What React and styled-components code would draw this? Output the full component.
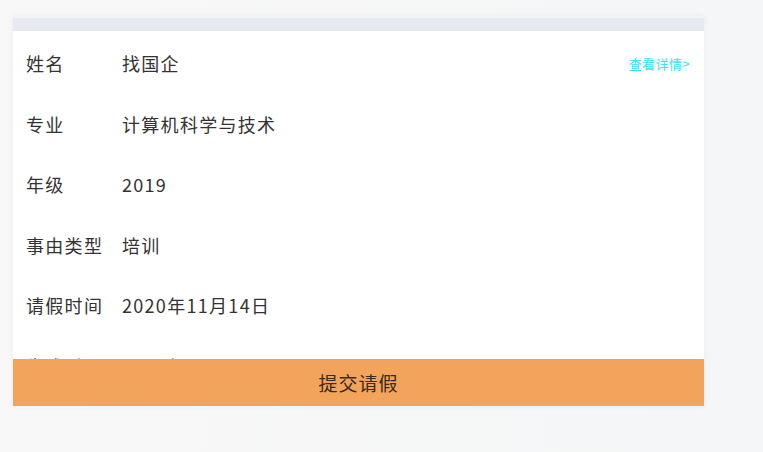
import styled, { createGlobalStyle } from 'styled-components';

const GlobalStyle = createGlobalStyle`
    body {
        margin: 0;
        background: #f6f6f7;
        font-family: "Noto Sans CJK SC", "Liberation Sans", sans-serif;
    }
`

const Page = styled.div`
    width: 763px;
    height: 452px;
    padding: 16px 0 0 13px;
    box-sizing: border-box;
    background: linear-gradient(to right, #f8f8f8, #f5f6f7);
`

const Card = styled.div`
    width: 691px;
    height: 390px;
    display: flex;
    flex-direction: column;
    background: #ffffff;
    box-shadow: 0 0 6px rgba(0, 0, 0, 0.06);
`

const TopStrip = styled.div`
    height: 15px;
    background: #e7eaf1;
    border-top: 2px solid #f3f3f5;
    box-sizing: border-box;
`

const Content = styled.div`
    flex: 1;
    overflow: hidden;
    padding-top: 2px;
`

const Row = styled.div`
    display: flex;
    align-items: center;
    height: 60.5px;
    padding: 0 12px 0 13px;
    font-size: 18px;
    color: #333;
`

const Label = styled.span`
    width: 96px;
    flex-shrink: 0;
    letter-spacing: 1.3px;
`

const Value = styled.span`
    flex: 1;
    letter-spacing: 1.3px;
`

const DetailLink = styled.a`
    font-size: 13px;
    color: #2be8f2;
    letter-spacing: 0.4px;
    margin-right: 2px;
`

const SubmitButton = styled.button`
    height: 47px;
    border: none;
    background: #f2a45c;
    color: #3a2a1c;
    font-family: inherit;
    font-size: 19px;
    letter-spacing: 1px;
    padding: 0;
`

const rows = [
    ['姓名', '找国企'],
    ['专业', '计算机科学与技术'],
    ['年级', '2019'],
    ['事由类型', '培训'],
    ['请假时间', '2020年11月14日'],
    ['生成时间', '2020年11月14日'],
]

const App = () => {
    return <Page>
        <GlobalStyle />
        <Card>
            <TopStrip />
            <Content>
                {rows.map(([label, value], i) => (
                    <Row key={label}>
                        <Label>{label}</Label>
                        <Value>{value}</Value>
                        {i === 0 && <DetailLink>查看详情&gt;</DetailLink>}
                    </Row>
                ))}
            </Content>
            <SubmitButton>提交请假</SubmitButton>
        </Card>
    </Page>
}

export default App;
